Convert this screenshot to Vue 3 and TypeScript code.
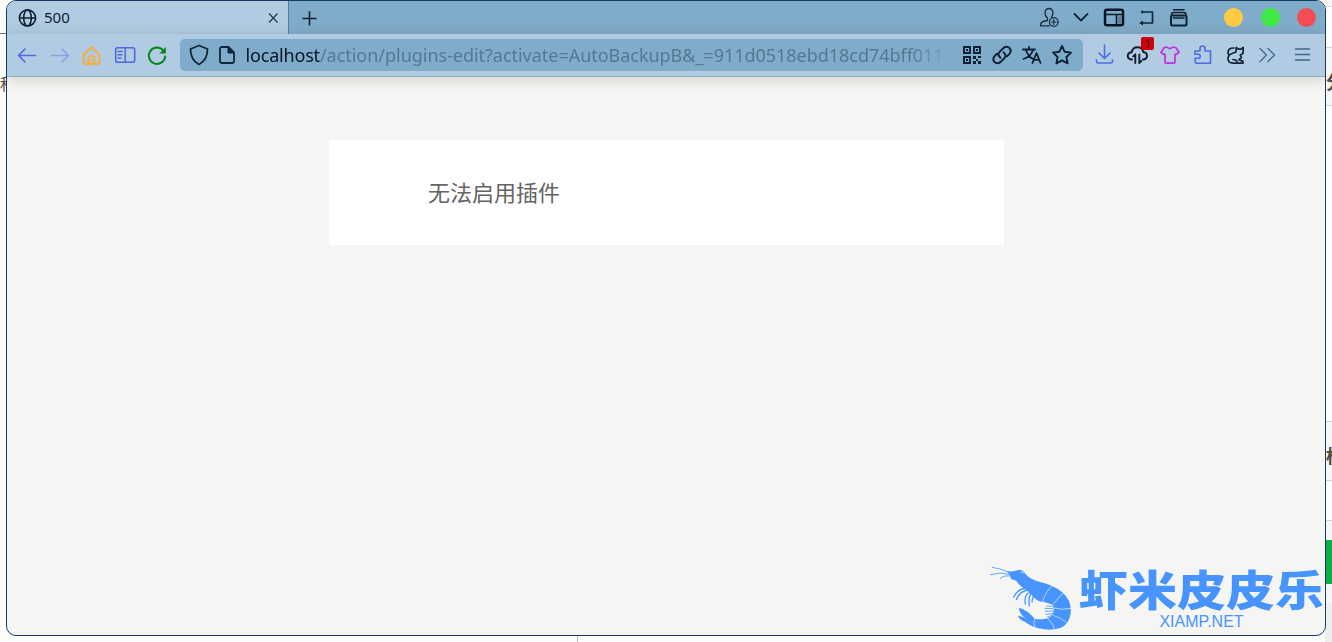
<script setup lang="ts">
interface Icon {
  name: string
  color: string
  body: string
}

const navIcons: Icon[] = [
  { name: 'back', color: '#5267e6', body: '<path d="M20.500 12.500H3.500M10 6l-6.500 6.500L10 19" stroke-width="1.6"/>' },
  { name: 'forward', color: '#8ba0e2', body: '<path d="M3.500 12.500h17M14 6l6.500 6.500L14 19" stroke-width="1.500"/>' },
  { name: 'home', color: '#f4ae43', body: '<path d="M3.500 12L11.500 4l8 8M3.500 11.500V19q0 2 2 2h12q2 0 2-2v-7.500M8.500 21v-5q0-3 3-3t3 3v5M11.500 17v4" stroke-width="2"/>' },
  { name: 'sidebar', color: '#5068df', body: '<rect x="2.700" y="4.700" width="19" height="14.500" rx="2" stroke-width="1.600"/><path d="M12.200 5v14M5 8.500h4M5 11.800h4M5 15h3" stroke-width="1.500"/>' },
  { name: 'reload', color: '#08851c', body: '<path d="M18.500 7.700A8.200 8.200 0 1 0 20.200 13.500" stroke-width="2"/><path d="M20.900 4v6.500h-6.500z" fill="#08851c" stroke="none"/>' },
]

const addressIcons: Icon[] = [
  { name: 'shield', color: '#10263b', body: '<path d="M12 2.500l8.500 3.500q0 11-8.500 15.500Q3.500 17 3.500 6z" stroke-width="1.800"/>' },
  { name: 'page', color: '#10263b', body: '<path d="M7 4h6.500l5.500 5.500V18q0 2-2 2H7q-2 0-2-2V6q0-2 2-2z" stroke-width="1.800"/><path d="M13 4v6h6z" fill="#10263b"/>' },
]

const actionIcons: Icon[] = [
  { name: 'qr', color: '#0d2135', body: '<path d="M4 4h6v6H4zM14 4h6v6h-6zM4 14h6v6H4z" stroke-width="1.900" stroke-linejoin="miter"/><path d="M6 6h2v2H6zM16 6h2v2h-2zM6 16h2v2H6zM13 13h3v3h-3zM18 13h3v2h-3zM16 16h2v2h-2zM13 18h3v3h-3zM18 18h3v3h-3z" fill="#0d2135" stroke="none"/>' },
  { name: 'link', color: '#0d2135', body: '<path d="M10.500 14.800q-3.700-3.200-.7-6.200l3.800-3.700q3.200-2.500 6 .2 2.300 3-.2 5.800l-2.400 2.400M13.500 9.200q3.700 3.200.7 6.200l-3.800 3.700q-3.200 2.500-6-.2-2.300-3 .2-5.800L7 10.700" stroke-width="2"/>' },
  { name: 'translate', color: '#0d2135', body: '<path d="M3 6.500h12M9 4v2.500M6 7q2 6.500 7 9M13 7q-2 6.500-9.500 9M12.500 20l4-10 4 10M14 16.800h5" stroke-width="1.800"/>' },
  { name: 'star', color: '#0d2135', body: '<path d="M12 3l2.700 5.800 6.300.8-4.600 4.400 1.200 6.400-5.600-3.100-5.600 3.100L7.600 14 3 9.600l6.300-.8z" stroke-width="1.900"/>' },
]

const extensionIcons: Icon[] = [
  { name: 'download', color: '#506de1', body: '<path d="M11.500 2v13M6 10l5.500 5.500L17 10M3.500 17v1.500q0 1.500 1.500 1.500h13q1.500 0 1.500-1.500V17" stroke-width="1.600"/>' },
  { name: 'cloud', color: '#111f30', body: '<path d="M7 16.500H6q-3.300-.7-3.300-3.800Q3 9.500 6.700 9.300 7.500 4.300 12.500 4.300T18.300 9q3.700.5 3.700 3.900 0 3-3.500 3.600h-.7M10.300 20v-8.500M8.300 13.300l2-2M14.300 11.500V20M16.300 18l-2 2" stroke-width="1.900"/>' },
  { name: 'shirt', color: '#c52ddb', body: '<path d="M9 4q3 3 6 0l3 .8 3 4.700-3.500 2.300-.5-.6V19q0 1.200-1.200 1.200H8.200Q7 20.200 7 19v-7.800l-.5.6L3 9.500l3-4.700z" stroke-width="1.700"/>' },
  { name: 'puzzle', color: '#506ae2', body: '<path d="M4 8h5V5.500q0-2.500 2.500-2.500T14 5.500V8h5.500v12.200H6q-1.800 0-1.800-2v-3H7q2.300 0 2.300-2T7 11.200H4z" stroke-width="1.600"/>' },
  { name: 'cat', color: '#152535', body: '<path d="M12.200 4.500l2.300 1.700h2.300l2.400-1.700v4.300q0 2.700-3 3.200l1.300 2.700-2.600 2 4 1.700v1.800H9q-4.800-.3-5-4.500 0-4 4-5.200l4-1.500zM10 5Q4.200 4.700 4 9.500q0 2.300 1.500 3M9 16.500q4 0 4.500 3.500" stroke-width="1.700"/>' },
  { name: 'overflow', color: '#45709a', body: '<path d="M4 5.500l6.500 6.500L4 18.500M12 5.500l6.500 6.500-6.500 6.500" stroke-width="1.500"/>' },
]

const windowIcons: Icon[] = [
  { name: 'profile', color: '#182d40', body: '<path d="M10.500 14.500v-2.300Q7.700 9.500 8 6.500q.5-4 4-4t4 4q0 2.500-1.500 4.500M10.500 14.500Q3 15.500 3.500 19.800h9" stroke-width="1.300"/><circle cx="16.800" cy="16" r="4.300" stroke-width="1.300"/><path d="M14.500 16h4.600M16.800 13.700v4.600" stroke-width="1.200"/>' },
  { name: 'chevron', color: '#10263b', body: '<path d="M4.500 8l6.500 6.500L17.500 8" stroke-width="1.800"/>' },
  { name: 'layout', color: '#0c1724', body: '<rect x="3" y="3.700" width="18" height="15.600" rx="2" stroke-width="2.500"/><path d="M4 8.500h16M14.500 9v9" stroke-width="1.600"/><path d="M16 10.500h3v7h-3z" fill="#5c7e98" stroke="none"/>' },
  { name: 'undo', color: '#10263b', body: '<path d="M7.500 6h10v11H5.500" stroke-width="1.700"/><path d="M4.500 17l3.500-2.500v5zM5.500 6l2.500-2v4z" fill="#10263b" stroke="none"/>' },
  { name: 'library', color: '#10202f', body: '<rect x="4" y="9.500" width="15.500" height="10" rx="1.500" stroke-width="2"/><path d="M4.500 9q0-2.500 2-2.500H17q2 0 2 2.500M6.500 3.700H17M6.500 12h10.500" stroke-width="1.500"/>' },
]

const windowDots: string[] = ['yellow', 'green', 'red']
</script>

<template>
  <div class="desktop">
    <aside class="behind left"><i class="rule"></i><span>科</span></aside>
    <aside class="behind right">
      <div class="field first"></div>
      <div class="label">分</div>
      <div class="field tall"></div>
      <div class="label tag">标</div>
      <div class="field short"></div>
      <div class="button"></div>
      <div class="footer"></div>
    </aside>
    <i class="bottom-rule"></i>

    <main class="window">
      <header class="tabs">
        <div class="tab">
          <svg class="globe" viewBox="0 0 20 20"><circle cx="10" cy="10.500" r="8.500"/><ellipse cx="10" cy="10.500" rx="4" ry="8.500"/><path d="M1.500 10.500h17"/></svg>
          <span>500</span>
          <svg class="close" viewBox="0 0 12 12"><path d="M2 1.500l8.500 9M10.500 1.500l-8.500 9"/></svg>
        </div>
        <svg class="plus" viewBox="0 0 18 18"><path d="M9 2.500v15M1.500 10h15"/></svg>
        <div class="window-icons">
          <svg v-for="icon in windowIcons" :key="icon.name" class="icon" viewBox="0 0 24 24" :stroke="icon.color" v-html="icon.body"></svg>
        </div>
        <div class="dots"><i v-for="dot in windowDots" :key="dot" :class="dot"></i></div>
      </header>

      <nav class="toolbar">
        <div class="nav-icons">
          <svg v-for="icon in navIcons" :key="icon.name" class="icon" viewBox="0 0 24 24" :stroke="icon.color" v-html="icon.body"></svg>
        </div>
        <div class="address">
          <svg v-for="icon in addressIcons" :key="icon.name" class="icon" viewBox="0 0 24 24" :stroke="icon.color" v-html="icon.body"></svg>
          <div class="url"><b>localhost</b>/action/plugins-edit?activate=AutoBackupB&amp;_=911d0518ebd18cd74bff0116</div>
          <div class="actions">
            <svg v-for="icon in actionIcons" :key="icon.name" class="icon" viewBox="0 0 24 24" :stroke="icon.color" v-html="icon.body"></svg>
          </div>
        </div>
        <div class="extensions">
          <div v-for="icon in extensionIcons" :key="icon.name" class="extension">
            <svg class="icon" viewBox="0 0 24 24" :stroke="icon.color" v-html="icon.body"></svg>
            <span v-if="icon.name === 'cloud'" class="badge">1</span>
          </div>
        </div>
        <svg class="icon menu" viewBox="0 0 24 24"><path d="M5.500 6h14M5.500 11.500h14M5.500 17h14"/></svg>
      </nav>

      <section class="content">
        <div class="message">无法启用插件</div>
      </section>

      <div class="brand">
        <svg class="shrimp" viewBox="15 6 249 198">
          <g class="feelers"><path d="M75 32Q48 20 22 16M74 37Q45 29 16 38M86 44Q56 37 46 49"/></g>
          <g class="legs"><path d="M132 80Q100 76 86 105M136 84Q105 84 94 113M137 91Q116 95 121 126M143 91Q128 100 133 131M150 93Q141 108 141 120"/></g>
          <path class="flesh" d="M65 27Q85 31 102 23L112 25 118 31 122 37Q135 52 165 60Q205 69 232 91Q261 117 257 153Q253 187 226 198Q194 208 161 199Q137 193 121 180Q103 172 98 161Q112 162 126 172Q101 155 102 138Q120 142 135 156Q144 163 149 171Q180 174 197 164Q212 151 203 130Q191 121 168 119Q151 115 137 95Q125 84 112 76Q98 64 94 56L78 51Q78 42 65 27z"/>
          <g class="shell"><path d="M172 121Q180 90 204 69M200 131Q218 110 234 94M207 138Q231 145 258 139M202 159Q224 166 244 181M185 168Q203 181 208 202M149 172Q143 184 151 197"/><path d="M109 26l9 10M107 31q5 0 8-3"/></g>
          <g class="hairs"><path d="M201 133L184 132M203 140L180 139M205 147L181 148M207 154L183 157M203 160L188 164"/></g>
        </svg>
        <div class="wordmark"><strong>虾米皮皮乐</strong><small>XIAMP.NET</small></div>
      </div>
    </main>
  </div>
</template>

<style>
body { background: #fcfcfb; overflow: hidden; }
</style>

<style scoped>
* { box-sizing: border-box; }
.desktop { position: relative; width: 1332px; height: 642px; overflow: hidden; background: #fcfcfb; font-family: "Noto Sans", "Noto Sans CJK SC", sans-serif; }
.behind { position: absolute; top: 0; height: 642px; overflow: hidden; }
.left { left: 0; width: 8px; padding-top: 33px; }
.rule { display: block; height: 1px; background: #777; }
.left span { display: block; margin-top: 37px; font: 16px/24px "Noto Sans CJK SC", sans-serif; color: #5d4b3f; }
.right { right: 0; width: 7px; background: #f6f6f5; }
.field { height: 42px; border: 1px solid #d5d5d8; border-width: 1px 0; background: #fff; }
.field.first { margin-top: 6px; }
.label { height: 57px; padding: 20px 0 0 1px; font: 700 18px/26px "Noto Sans CJK SC", sans-serif; color: #544a3f; white-space: nowrap; }
.field.tall { height: 317px; }
.label.tag { padding-top: 20px; height: 58px; }
.field.short { height: 41px; }
.button { height: 44px; margin-top: 19px; background: #0bb147; }
.footer { height: 39px; margin-top: 19px; background: #eee; }
.bottom-rule { position: absolute; left: 577px; bottom: 0; width: 1px; height: 6px; background: #bbb; }
.window { position: absolute; left: 6px; top: 0; display: flex; flex-direction: column; width: 1320px; height: 636px; overflow: hidden; border: 1px solid #173967; border-radius: 10px; background: #f5f6f4; }
.tabs { display: flex; flex: 0 0 33px; align-items: center; background: #80accb; }
.tab { display: flex; align-items: center; width: 282px; height: 33px; padding: 0 9px 0 11px; border-right: 1px solid #4c80a8; background: #b0cbe2; }
.globe { width: 19px; height: 19px; fill: none; stroke: #10202f; stroke-width: 1.700; }
.tab span { margin: -1px auto 0 7px; color: #10202f; font-size: 15px; line-height: 20px; }
.close { width: 12px; height: 12px; stroke: #23394c; stroke-width: 1.200; }
.plus { width: 17px; height: 17px; margin-left: 12px; stroke: #10202f; stroke-width: 1.700; }
.window-icons { display: flex; gap: 8.500px; margin-left: auto; }
.icon { display: block; flex: none; width: 24px; height: 24px; fill: none; stroke-linecap: round; stroke-linejoin: round; }
.dots { display: flex; gap: 17.500px; margin: 0 9px 0 33px; }
.dots i { width: 19px; height: 19px; border-radius: 50%; }
.yellow { background: #ffcb45; }
.green { background: #40e943; }
.red { background: #f44d55; }
.toolbar { position: relative; z-index: 1; display: flex; flex: 0 0 43px; align-items: center; padding: 0 11px 0 8px; border-bottom: 1px solid #88adc2; background: #b0cbe2; box-shadow: 0 2px 13px rgba(72, 67, 51, .23); }
.nav-icons { display: flex; gap: 8.500px; }
.address { display: flex; align-items: center; width: 903px; height: 32px; margin-left: 11px; padding: 0 9px 0 7px; border-radius: 5px; background: #80accb; }
.address > .icon + .icon { margin-left: 4px; }
.url { width: 707px; margin-left: 6.500px; overflow: hidden; color: #517894; font-size: 18px; line-height: 28px; letter-spacing: -.03px; white-space: nowrap; -webkit-mask-image: linear-gradient(90deg, #000 94%, transparent 99.5%); mask-image: linear-gradient(90deg, #000 94%, transparent 99.5%); }
.url b { color: #071524; font-weight: 400; letter-spacing: -.18px; }
.actions { display: flex; gap: 6px; margin-left: auto; }
.extensions { display: flex; gap: 8.800px; margin-left: 9.500px; }
.extension { position: relative; }
.badge { position: absolute; left: 16px; top: -6px; width: 13px; height: 13px; border-radius: 2px; background: #d00008; color: #210809; font-size: 12px; line-height: 13px; text-align: center; }
.menu { margin-left: auto; stroke: #416789; stroke-width: 1.500; }
.content { display: flex; justify-content: center; padding-top: 63px; }
.message { width: 675px; height: 105px; margin-left: 1px; padding: 36px 99px; background: #fff; color: #646464; font: 400 22px/31px "Noto Sans CJK SC", sans-serif; }
.brand { position: absolute; right: 2px; bottom: 2px; display: flex; width: 333px; height: 69px; color: #4794ff; }
.shrimp { flex: none; width: 83px; height: 66px; }
.flesh { fill: #4794ff; }
.feelers, .legs, .hairs { fill: none; stroke: #4794ff; stroke-width: 2.500; stroke-linecap: round; }
.legs { stroke-width: 4; }
.shell { fill: none; stroke: #edf4ff; stroke-width: 2; }
.wordmark { display: flex; flex-direction: column; width: 249px; padding-left: 6px; }
.wordmark strong { height: 48px; padding-top: 3px; font: 900 49px/42px "Noto Sans CJK SC", sans-serif; white-space: nowrap; transform: scaleY(.86); }
.wordmark small { align-self: center; margin-left: 2px; font: 16px/20px "Liberation Sans", Arial, sans-serif; }
</style>
